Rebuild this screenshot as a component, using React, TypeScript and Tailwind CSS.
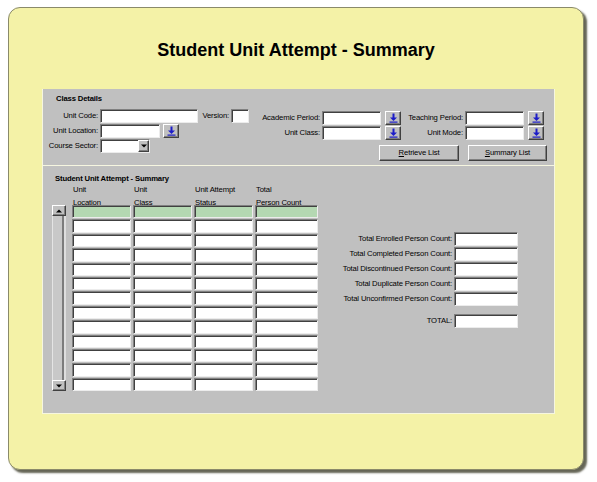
import React from 'react';

const font = "font-['Liberation_Sans',Arial,sans-serif]";
const sunken =
  'border border-t-[#808080] border-l-[#808080] border-b-[#ececec] border-r-[#ececec] shadow-[inset_1px_1px_0_#404040]';
const raised =
  'bg-[#c0c0c0] border border-t-white border-l-white border-b-[#404040] border-r-[#404040] shadow-[inset_-1px_-1px_0_#808080]';

function Field({ w }: { w: string }) {
  return <div className={`${w} h-[14px] bg-white ${sunken}`} />;
}

function LovButton() {
  return (
    <div className={`w-[16px] h-[14px] ${raised} flex items-center justify-center`}>
      <svg width="9" height="10" viewBox="0 0 9 10">
        <rect x="3.5" y="0.5" width="2" height="4.5" fill="#1c1cc8" />
        <polygon points="1,4.5 8,4.5 4.5,8" fill="#1c1cc8" />
        <rect x="0.5" y="8.5" width="8" height="1.2" fill="#1c1cc8" />
      </svg>
    </div>
  );
}

function Triangle({ up }: { up?: boolean }) {
  return (
    <svg width="6" height="4" viewBox="0 0 6 4">
      <polygon points={up ? '0,3.5 6,3.5 3,0.5' : '0,0.5 6,0.5 3,3.5'} fill="#000" />
    </svg>
  );
}

function Label({ w, children }: { w: string; children: React.ReactNode }) {
  return <div className={`${w} text-right whitespace-nowrap leading-[14px]`}>{children}</div>;
}

const cols = ['w-[59px]', 'w-[59px]', 'w-[59px]', 'w-[63px]'];
const headers = [
  ['Unit', 'Location'],
  ['Unit', 'Class'],
  ['Unit Attempt', 'Status'],
  ['Total', 'Person Count'],
];
const totals = [
  'Total Enrolled Person Count:',
  'Total Completed Person Count:',
  'Total Discontinued Person Count:',
  'Total Duplicate Person Count:',
  'Total Unconfirmed Person Count:',
];

export default function App() {
  return (
    <div className={`min-h-[482px] bg-white pl-[8px] pt-[7px] ${font} text-black`}>
      <div className="w-[576px] h-[463px] rounded-[12px] border border-[#8a8a6a] bg-[#f4f2a7] shadow-[3px_3px_2px_rgba(50,50,30,0.75)] flex flex-col">
        <h1 className="mt-[31px] h-[22px] text-center text-[18px] leading-[22px] font-bold">
          Student Unit Attempt - Summary
        </h1>

        <div className="mt-[28px] ml-[33px] w-[513px] flex flex-col text-[7.7px] tracking-[-0.15px]">
          {/* Class Details */}
          <div className="h-[77px] bg-[#c0c0c0] border-x border-b border-[#f6f6e0] flex flex-col">
            <div className="pt-[5px] pl-[13px] h-[15px] leading-[10px] font-bold">Class Details</div>
            <div className="mt-[5px] flex">
              <div className="w-[209px] flex flex-col gap-[1px]">
                <div className="flex items-center">
                  <Label w="w-[55px]">Unit Code:</Label>
                  <div className="ml-[2px]"><Field w="w-[98px]" /></div>
                  <Label w="w-[31px]">Version:</Label>
                  <div className="ml-[2px]"><Field w="w-[18px]" /></div>
                </div>
                <div className="flex items-center">
                  <Label w="w-[55px]">Unit Location:</Label>
                  <div className="ml-[2px]"><Field w="w-[60px]" /></div>
                  <div className="ml-[3px]"><LovButton /></div>
                </div>
                <div className="flex items-center">
                  <Label w="w-[55px]">Course Sector:</Label>
                  <div className={`ml-[2px] w-[50px] h-[14px] bg-white ${sunken} flex justify-end`}>
                    <div className={`w-[11px] h-full ${raised} flex items-center justify-center`}>
                      <Triangle />
                    </div>
                  </div>
                </div>
              </div>

              <div className="mt-[2px] flex flex-col gap-[1px]">
                <div className="flex items-center">
                  <Label w="w-[68px]">Academic Period:</Label>
                  <div className="ml-[2px]"><Field w="w-[59px]" /></div>
                  <div className="ml-[4px]"><LovButton /></div>
                  <Label w="w-[62px]">Teaching Period:</Label>
                  <div className="ml-[2px]"><Field w="w-[59px]" /></div>
                  <div className="ml-[4px]"><LovButton /></div>
                </div>
                <div className="flex items-center">
                  <Label w="w-[68px]">Unit Class:</Label>
                  <div className="ml-[2px]"><Field w="w-[59px]" /></div>
                  <div className="ml-[4px]"><LovButton /></div>
                  <Label w="w-[62px]">Unit Mode:</Label>
                  <div className="ml-[2px]"><Field w="w-[59px]" /></div>
                  <div className="ml-[4px]"><LovButton /></div>
                </div>
                <div className="mt-[4px] ml-[127px] flex gap-[9px]">
                  <button className={`w-[80px] h-[16px] ${raised} leading-[14px]`}>
                    <span className="underline">R</span>etrieve List
                  </button>
                  <button className={`w-[79px] h-[16px] ${raised} leading-[14px]`}>
                    <span className="underline">S</span>ummary List
                  </button>
                </div>
              </div>
            </div>
          </div>

          {/* Student Unit Attempt - Summary */}
          <div className="h-[248px] bg-[#c0c0c0] border-x border-b border-[#f6f6e0] flex flex-col">
            <div className="pt-[8px] pl-[12px] h-[18px] leading-[10px] font-bold">
              Student Unit Attempt - Summary
            </div>
            <div className="flex">
              <div className="pl-[9px] flex flex-col">
                <div className="ml-[20px] h-[21px] overflow-hidden flex gap-[2px] leading-[12.5px]">
                  {headers.map((h, i) => (
                    <div key={i} className={`${cols[i]} pl-[1px]`}>
                      <div>{h[0]}</div>
                      <div>{h[1]}</div>
                    </div>
                  ))}
                </div>
                <div className="flex">
                  <div className="w-[14px] h-[186px] flex flex-col">
                    <div className={`h-[11px] ${raised} flex items-center justify-center`}>
                      <Triangle up />
                    </div>
                    <div className="flex-1 flex border-l border-[#e4e4e4]">
                      <div className="flex-1 bg-[#c8c8c8] border-r-2 border-[#7c7c7c]" />
                      <div className="w-[2px] bg-[#dedede]" />
                    </div>
                    <div className={`h-[11px] ${raised} flex items-center justify-center`}>
                      <Triangle />
                    </div>
                  </div>
                  <div className="ml-[6px] h-[186px] flex flex-col gap-[1px]">
                    {Array.from({ length: 13 }).map((_, r) => (
                      <div key={r} className="flex-1 flex gap-[2px]">
                        {cols.map((c, i) => (
                          <div
                            key={i}
                            className={`${c} h-full ${sunken} ${r === 0 ? 'bg-[#b4d8b2]' : 'bg-white'}`}
                          />
                        ))}
                      </div>
                    ))}
                  </div>
                </div>
              </div>

              <div className="mt-[48px] flex flex-col gap-[1px]">
                {totals.map((t) => (
                  <div key={t} className="flex items-center">
                    <Label w="w-[134px]">{t}</Label>
                    <div className="ml-[2px]"><Field w="w-[64px]" /></div>
                  </div>
                ))}
                <div className="mt-[7px] flex items-center">
                  <Label w="w-[134px]">TOTAL:</Label>
                  <div className="ml-[2px]"><Field w="w-[64px]" /></div>
                </div>
              </div>
            </div>
          </div>
        </div>
      </div>
    </div>
  );
}
